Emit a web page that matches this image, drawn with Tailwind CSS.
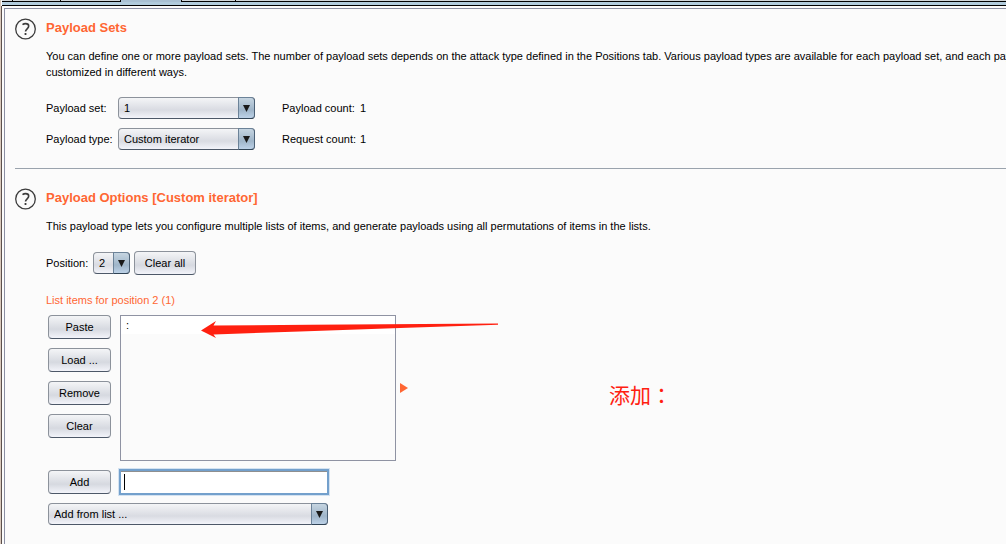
<!DOCTYPE html>
<html lang="en">
<head>
    <meta charset="UTF-8">
    <meta name="viewport" content="width=device-width, initial-scale=1.0">
    <title>Payloads</title>
    <script src="https://cdn.jsdelivr.net/npm/@tailwindcss/browser@4"></script>
</head>
<body class="bg-[#fbfbfb] text-black text-[11px] leading-4 font-['Liberation_Sans',Arial,sans-serif] overflow-x-hidden">

    <div class="flex flex-col min-h-screen border-l border-[#d8c8bc]">

        <!-- Bottom edge of the tab strip -->
        <header class="flex flex-col ml-px">
            <div class="flex h-[2px] bg-[#d0d6da]">
                <div class="w-[11px] border-r border-black border-b"></div>
                <div class="w-12 border-r border-black border-b"></div>
                <div class="w-[60px] border-r border-black border-b"></div>
                <div class="w-[60px] bg-[#a9c0d2]"></div>
                <div class="w-[55px] border-x border-black border-b"></div>
                <div class="grow border-b border-black"></div>
            </div>
            <div class="h-[3px] bg-[#b1cbdc]"></div>
            <div class="h-px bg-black"></div>
        </header>

        <div class="flex grow border-l border-[#5c504c] pt-[2px] pl-[2px]">
            <main class="grow min-w-0 overflow-hidden border-l border-t border-[#8b8fa3] pl-[10px]">

                <section class="flex pt-[9px] pb-[18px] border-b border-[#9aa3ad]">
                    <svg class="size-[22px] shrink-0 mr-[9px]" viewBox="0 0 22 22" fill="none" stroke="#3c3c3c" aria-hidden="true">
                        <circle cx="10.5" cy="11" r="9.8" stroke-width="1.3"/>
                        <path d="M7.500 6.700c1-.8 2-1.100 3.100-1.100 2 0 3.100 1 3.100 2.500 0 2.600-3.200 2.800-3.200 5.500" stroke-width="1.600"/>
                        <path d="M10.500 15v2" stroke-width="1.800"/>
                    </svg>
                    <div class="min-w-0">
                        <h2 class="text-[13px] leading-5 font-bold text-[#ff6633]">Payload Sets</h2>
                        <p class="mt-[10px] whitespace-nowrap">You can define one or more payload sets. The number of payload sets depends on the attack type defined in the Positions tab. Various payload types are available for each payload set, and each pay<br>customized in different ways.</p>

                        <div class="mt-[17px] grid grid-cols-[72px_164px_78px_auto] gap-y-[9px] items-center">
                            <label for="payload-set">Payload set:</label>
                            <div class="relative w-[137px]">
                                <select id="payload-set" class="block appearance-none w-full h-[22px] pl-[5px] rounded-[4px] border border-[#8c929b] border-b-[#4d5868] bg-linear-to-b from-[#f4f5f7] via-[#d9dbe2] via-60% to-[#f3f4fa]"><option>1</option></select>
                                <div class="absolute right-0 inset-y-0 w-[17px] grid place-items-center rounded-r-[4px] border border-[#6b8298] border-b-[#2f4254] border-r-[#4b6075] bg-linear-to-b from-[#c6d5e1] via-[#9fb5c9] via-60% to-[#bdd2e8] pointer-events-none">
                                    <svg class="w-[7px] h-[7px]" viewBox="0 0 7 7" fill="#1a1a1a"><path d="M0 0h7L3.500 7z"/></svg>
                                </div>
                            </div>
                            <span>Payload count:</span>
                            <span>1</span>

                            <label for="payload-type">Payload type:</label>
                            <div class="relative w-[137px]">
                                <select id="payload-type" class="block appearance-none w-full h-[22px] pl-[5px] rounded-[4px] border border-[#8c929b] border-b-[#4d5868] bg-linear-to-b from-[#f4f5f7] via-[#d9dbe2] via-60% to-[#f3f4fa]"><option>Custom iterator</option></select>
                                <div class="absolute right-0 inset-y-0 w-[17px] grid place-items-center rounded-r-[4px] border border-[#6b8298] border-b-[#2f4254] border-r-[#4b6075] bg-linear-to-b from-[#c6d5e1] via-[#9fb5c9] via-60% to-[#bdd2e8] pointer-events-none">
                                    <svg class="w-[7px] h-[7px]" viewBox="0 0 7 7" fill="#1a1a1a"><path d="M0 0h7L3.500 7z"/></svg>
                                </div>
                            </div>
                            <span>Request count:</span>
                            <span>1</span>
                        </div>
                    </div>
                </section>

                <section class="flex pt-[19px]">
                    <svg class="size-[22px] shrink-0 mr-[9px]" viewBox="0 0 22 22" fill="none" stroke="#3c3c3c" aria-hidden="true">
                        <circle cx="10.5" cy="11" r="9.8" stroke-width="1.3"/>
                        <path d="M7.500 6.700c1-.8 2-1.100 3.100-1.100 2 0 3.100 1 3.100 2.500 0 2.600-3.200 2.800-3.200 5.500" stroke-width="1.600"/>
                        <path d="M10.500 15v2" stroke-width="1.800"/>
                    </svg>
                    <div class="grow min-w-0">
                        <h2 class="text-[13px] leading-5 font-bold text-[#ff6633]">Payload Options [Custom iterator]</h2>
                        <p class="mt-[10px]">This payload type lets you configure multiple lists of items, and generate payloads using all permutations of items in the lists.</p>

                        <div class="mt-[17px] flex items-center">
                            <label for="position" class="w-[47px]">Position:</label>
                            <div class="relative w-[37px]">
                                <select id="position" class="block appearance-none w-full h-[22px] pl-[5px] rounded-[4px] border border-[#8c929b] border-b-[#4d5868] bg-linear-to-b from-[#f4f5f7] via-[#d9dbe2] via-60% to-[#f3f4fa]"><option>2</option></select>
                                <div class="absolute right-0 inset-y-0 w-[17px] grid place-items-center rounded-r-[4px] border border-[#6b8298] border-b-[#2f4254] border-r-[#4b6075] bg-linear-to-b from-[#c6d5e1] via-[#9fb5c9] via-60% to-[#bdd2e8] pointer-events-none">
                                    <svg class="w-[7px] h-[7px]" viewBox="0 0 7 7" fill="#1a1a1a"><path d="M0 0h7L3.500 7z"/></svg>
                                </div>
                            </div>
                            <button type="button" class="ml-1 w-[62px] h-6 rounded-[4px] border border-[#8c929b] border-b-[#4d5868] bg-linear-to-b from-[#f4f5f7] via-[#d6d9e0] via-60% to-[#f3f4fa]">Clear all</button>
                        </div>

                        <h3 class="mt-[17px] text-[#ff6633]">List items for position 2 (1)</h3>

                        <div class="mt-[7px] ml-[2px] flex items-start">
                            <div class="w-[63px] flex flex-col gap-[9px]">
                                <button type="button" class="h-6 rounded-[4px] border border-[#8c929b] border-b-[#4d5868] bg-linear-to-b from-[#f4f5f7] via-[#d6d9e0] via-60% to-[#f3f4fa]">Paste</button>
                                <button type="button" class="h-6 rounded-[4px] border border-[#8c929b] border-b-[#4d5868] bg-linear-to-b from-[#f4f5f7] via-[#d6d9e0] via-60% to-[#f3f4fa]">Load ...</button>
                                <button type="button" class="h-6 rounded-[4px] border border-[#8c929b] border-b-[#4d5868] bg-linear-to-b from-[#f4f5f7] via-[#d6d9e0] via-60% to-[#f3f4fa]">Remove</button>
                                <button type="button" class="h-6 rounded-[4px] border border-[#8c929b] border-b-[#4d5868] bg-linear-to-b from-[#f4f5f7] via-[#d6d9e0] via-60% to-[#f3f4fa]">Clear</button>
                            </div>
                            <div class="relative ml-[9px] flex items-center">
                                <ul class="w-[276px] h-[146px] border border-[#8f93a3]">
                                    <li class="h-[18px] pl-[5px] leading-[18px] bg-white">:</li>
                                </ul>
                                <svg class="ml-1 w-2 h-[10px]" viewBox="0 0 8 10" fill="#ff6633"><path d="M0 0l8 5-8 5z"/></svg>
                                <!-- Annotation arrow -->
                                <svg class="absolute left-[80px] top-[5px] w-[298px] h-[18px]" viewBox="0 0 298 18" fill="#ff2010"><path d="M1 10.500L16 1l-2.500 4.500L110 4.800 298 3.500v1.300L200 8 100 11.500 13.500 14.500 16 18z"/></svg>
                            </div>
                            <p class="ml-[201px] mt-[65px] text-[21px] leading-7 text-[#ff2010] whitespace-nowrap font-['Noto_Sans_CJK_TC',sans-serif]" lang="zh-TW">添加：</p>
                        </div>

                        <div class="mt-2 ml-[2px] flex items-center">
                            <button type="button" class="w-[63px] h-6 rounded-[4px] border border-[#8c929b] border-b-[#4d5868] bg-linear-to-b from-[#f4f5f7] via-[#d6d9e0] via-60% to-[#f3f4fa]">Add</button>
                            <div class="relative ml-2">
                                <input type="text" aria-label="New item" class="block w-[210px] h-[26px] pl-1 bg-white border-2 border-[#73a0cc] outline-none shadow-[inset_0_1px_0_#8f8f8f,0_0_0_1px_#d3e2f1]">
                                <span class="absolute left-[5px] inset-y-[5px] w-px bg-black"></span>
                            </div>
                        </div>

                        <div class="relative mt-2 ml-[2px] w-[280px]">
                            <select aria-label="Add from list" class="block appearance-none w-full h-[22px] pl-[5px] rounded-[4px] border border-[#8c929b] border-b-[#4d5868] bg-linear-to-b from-[#f4f5f7] via-[#d9dbe2] via-60% to-[#f3f4fa]"><option>Add from list ...</option></select>
                            <div class="absolute right-0 inset-y-0 w-[17px] grid place-items-center rounded-r-[4px] border border-[#6b8298] border-b-[#2f4254] border-r-[#4b6075] bg-linear-to-b from-[#c6d5e1] via-[#9fb5c9] via-60% to-[#bdd2e8] pointer-events-none">
                                <svg class="w-[7px] h-[7px]" viewBox="0 0 7 7" fill="#1a1a1a"><path d="M0 0h7L3.500 7z"/></svg>
                            </div>
                        </div>
                    </div>
                </section>

            </main>
        </div>
    </div>

</body>
</html>
